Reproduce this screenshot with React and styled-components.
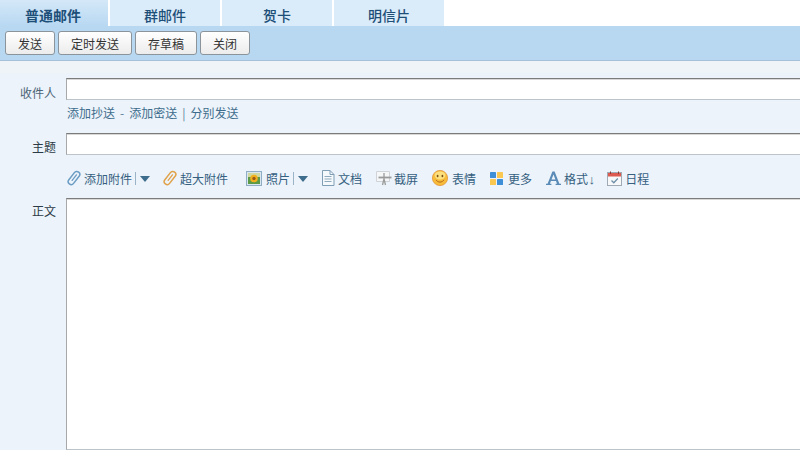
import React from 'react';
import styled, { createGlobalStyle } from 'styled-components';

const GlobalStyle = createGlobalStyle`
html, body {
    margin: 0;
    padding: 0;
    height: 100%;
    overflow: hidden;
    background: #fff;
}
#root {
    height: 100%;
}
`

const Page = styled.div`
width: 800px;
height: 450px;
overflow: hidden;
display: flex;
flex-direction: column;
font-family: "Noto Sans CJK SC", "Liberation Sans", sans-serif;
font-size: 12px;
`

const TabBar = styled.div`
display: flex;
height: 26px;
gap: 2px;
flex-shrink: 0;
`

const Tab = styled.div`
width: ${props => props.$active ? '108px' : '110px'};
display: flex;
align-items: center;
justify-content: center;
padding: 4px ${props => props.$active ? '2px' : '0'} 0 0;
box-sizing: border-box;
font-size: 14px;
font-weight: ${props => props.$active ? 700 : 500};
color: #1d4f78;
background: ${props => props.$active
    ? 'linear-gradient(#d4e8f8, #b8d8f2)'
    : '#daebf9'};
`

const Toolbar = styled.div`
height: 35px;
flex-shrink: 0;
display: flex;
align-items: flex-start;
gap: 3px;
padding: 5px 0 0 5px;
box-sizing: border-box;
background: #b8d8f2;
border-bottom: 1px solid #a5c0d8;
`

const ToolButton = styled.button`
width: ${props => props.$width}px;
height: 24px;
padding: 0;
font-family: inherit;
font-size: 12px;
color: #333;
border: 1px solid #8c949b;
border-radius: 3px;
background: linear-gradient(#ffffff, #ececec);
`

const Form = styled.div`
flex: 1;
min-height: 0;
display: flex;
flex-direction: column;
padding-top: 17px;
background: linear-gradient(#eff4f9 12px, #ecf3fa 12px);
`

const Row = styled.div`
display: flex;
flex: ${props => props.$grow ? 1 : 'none'};
height: ${props => props.$grow ? 'auto' : '22px'};
min-height: 0;
`

const Label = styled.div`
width: 56px;
flex-shrink: 0;
margin-right: 10px;
text-align: right;
line-height: 21px;
padding-top: ${props => props.$offset}px;
color: ${props => props.$muted ? '#4d6577' : '#2b3a45'};
`

const TextField = styled.div`
flex: 1;
box-sizing: border-box;
background: #fff;
border-top: 1px solid #7b7b7b;
border-left: 1px solid #a8a8a8;
border-bottom: 1px solid #bcc3c9;
box-shadow: inset 0 1px 0 #d8d8d8;
`

const LinkRow = styled.div`
display: flex;
align-items: center;
height: 33px;
margin-left: 67px;
padding-bottom: 9px;
box-sizing: border-box;
color: #3d6c8c;
`

const Sep = styled.span`
margin: 0 ${props => props.$gap}px;
color: #5a7f99;
`

const AttachBar = styled.div`
display: flex;
align-items: center;
height: 43px;
margin-left: 67px;
padding-top: 3px;
box-sizing: border-box;
color: #35607f;
`

const Tool = styled.div`
display: flex;
align-items: center;
gap: ${props => props.$gap}px;
margin-right: ${props => props.$after}px;
white-space: nowrap;
`

const Divider = styled.span`
width: 1px;
height: 13px;
margin: 0 3px;
background: #9ab3c6;
`

const Caret = styled.span`
width: 0;
height: 0;
margin: 2px ${props => props.$after}px 0 1px;
border-left: 5.5px solid transparent;
border-right: 5.5px solid transparent;
border-top: 6px solid #3d6c8c;
`

const DownArrow = styled.span`
display: inline-block;
width: 7px;
font-family: "Liberation Sans", sans-serif;
font-size: 13px;
line-height: 12px;
text-align: center;
`

const Clip = ({ edge }) => (
    <svg width="14" height="16" viewBox="0 0 14 16" fill="none">
        <g transform="rotate(38 7 8)" stroke={edge} strokeLinecap="round">
            <rect x="4" y="0.5" width="6" height="15" rx="3" strokeWidth="1.5" />
            <path d="M7 4 V11" strokeWidth="1.3" />
        </g>
    </svg>
)

const PhotoIcon = () => (
    <svg width="16" height="15" viewBox="0 0 16 15">
        <rect x="0.5" y="0.5" width="15" height="14" fill="#dbe7f0" stroke="#8fadc4" />
        <rect x="2" y="2" width="12" height="11" fill="#5c9a48" />
        <rect x="2" y="2" width="12" height="4" fill="#cfd8a0" />
        <circle cx="8" cy="7.5" r="3.8" fill="#f2b01e" />
        <circle cx="8" cy="7.5" r="1.7" fill="#9a5a18" />
    </svg>
)

const DocIcon = () => (
    <svg width="14" height="16" viewBox="0 0 14 16" fill="none">
        <path d="M1.5 0.5 H9 L13 4.5 V15.5 H1.5 Z" fill="#f6f9fc" stroke="#7f9db5" />
        <path d="M9 0.5 V4.5 H13" stroke="#7f9db5" />
        <path d="M3.5 6.5 H10.5 M3.5 9 H10.5 M3.5 11.5 H10.5" stroke="#8fa9bd" />
    </svg>
)

const ScreenshotIcon = () => (
    <svg width="16" height="16" viewBox="0 0 16 16" fill="none">
        <path d="M0.5 1.5 H13.5 V11.5 H0.5 Z" fill="#f4f6f8" stroke="#d0d4d8" />
        <path d="M8 3 V9 L6.5 15 M8 9 L9.5 15" stroke="#9a9a9a" strokeWidth="1.3" />
        <path d="M2.5 7.5 H15.5" stroke="#9a9a9a" strokeWidth="1.8" />
    </svg>
)

const SmileIcon = () => (
    <svg width="16" height="16" viewBox="0 0 16 16">
        <circle cx="8" cy="8" r="7.6" fill="#f7bd3a" stroke="#e3953a" strokeWidth="0.8" />
        <ellipse cx="8" cy="5.4" rx="5.4" ry="4" fill="#fde07e" />
        <ellipse cx="5.6" cy="6" rx="0.9" ry="1.2" fill="#7a4f18" />
        <ellipse cx="10.4" cy="6" rx="0.9" ry="1.2" fill="#7a4f18" />
        <path d="M4 9.8 C5.5 12.8 10.5 12.8 12 9.8" stroke="#b5651d" strokeWidth="1" fill="none" />
    </svg>
)

const MoreIcon = () => (
    <svg width="13" height="13" viewBox="0 0 13 13">
        <rect x="0" y="0" width="6" height="6" rx="0.6" fill="#3f8fd8" />
        <rect x="7" y="0" width="6" height="6" rx="0.6" fill="#fac850" />
        <rect x="0" y="7" width="6" height="6" rx="0.6" fill="#fac850" />
        <rect x="7" y="7" width="6" height="6" rx="0.6" fill="#3f8fd8" />
    </svg>
)

const FontIcon = () => (
    <svg width="15" height="14" viewBox="0 0 15 14">
        <path d="M6.4 0.5 H8.6 L13.4 12.8 H15 V14 H9.6 V12.8 H11 L10 10 H4.9 L3.9 12.8 H5.4 V14 H0 V12.8 H1.6 Z M5.5 8.6 H9.4 L7.5 3.6 Z"
            fill="#5a8ab6" fillRule="evenodd" />
    </svg>
)

const CalendarIcon = () => (
    <svg width="15" height="15" viewBox="0 0 15 15" fill="none">
        <rect x="0.5" y="1.5" width="14" height="13" fill="#f6f8fa" stroke="#a0aab4" />
        <rect x="1" y="2" width="13" height="3.5" fill="#dc5a50" />
        <path d="M3.5 0.5 V3 M11.5 0.5 V3" stroke="#8a3a34" />
        <path d="M4.5 9.5 L6.8 11.8 L10.8 7.5" stroke="#6f8fa8" strokeWidth="1.3" />
    </svg>
)

const App = () => {
    return (
        <Page>
            <GlobalStyle />
            <TabBar>
                <Tab $active>普通邮件</Tab>
                <Tab>群邮件</Tab>
                <Tab>贺卡</Tab>
                <Tab>明信片</Tab>
            </TabBar>
            <Toolbar>
                <ToolButton $width={50}>发送</ToolButton>
                <ToolButton $width={74}>定时发送</ToolButton>
                <ToolButton $width={62}>存草稿</ToolButton>
                <ToolButton $width={50}>关闭</ToolButton>
            </Toolbar>
            <Form>
                <Row>
                    <Label $muted $offset={4}>收件人</Label>
                    <TextField />
                </Row>
                <LinkRow>
                    添加抄送<Sep $gap={5}>-</Sep>添加密送<Sep $gap={5}>|</Sep>分别发送
                </LinkRow>
                <Row>
                    <Label $offset={3}>主题</Label>
                    <TextField />
                </Row>
                <AttachBar>
                    <Tool $after={0} $gap={3}><Clip edge="#6b9dc4" />添加附件</Tool>
                    <Divider />
                    <Caret $after={13} />
                    <Tool $after={18} $gap={3}><Clip edge="#e0a24a" />超大附件</Tool>
                    <Tool $after={0} $gap={4}><PhotoIcon />照片</Tool>
                    <Divider />
                    <Caret $after={13} />
                    <Tool $after={14} $gap={3}><DocIcon />文档</Tool>
                    <Tool $after={14} $gap={2}><ScreenshotIcon />截屏</Tool>
                    <Tool $after={14} $gap={4}><SmileIcon />表情</Tool>
                    <Tool $after={14} $gap={5}><MoreIcon />更多</Tool>
                    <Tool $after={12} $gap={3}><FontIcon /><span>格式<DownArrow>↓</DownArrow></span></Tool>
                    <Tool $after={0} $gap={3}><CalendarIcon />日程</Tool>
                </AttachBar>
                <Row $grow>
                    <Label $offset={2}>正文</Label>
                    <TextField />
                </Row>
            </Form>
        </Page>
    )
}

export default App
